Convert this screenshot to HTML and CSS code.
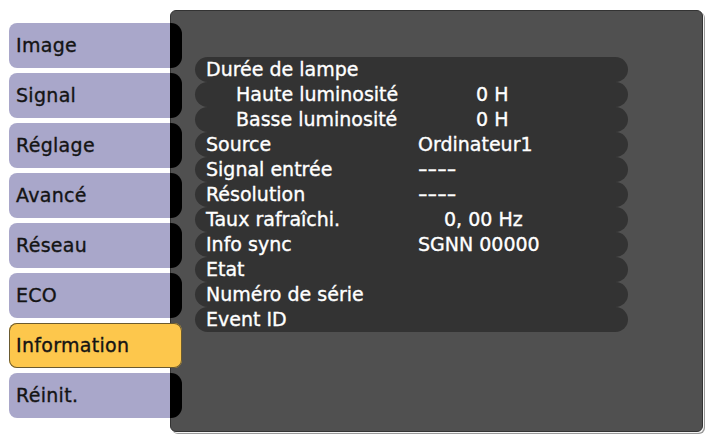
FILE: index.html
```html
<!DOCTYPE html>
<html lang="fr">
<head>
<meta charset="utf-8">
<title>Information</title>
<link rel="stylesheet" href="styles.css">
</head>
<body>
<div class="screen">
  <nav class="tabs">
    <div class="tab">Image</div>
    <div class="tab">Signal</div>
    <div class="tab">Réglage</div>
    <div class="tab">Avancé</div>
    <div class="tab">Réseau</div>
    <div class="tab">ECO</div>
    <div class="tab active">Information</div>
    <div class="tab">Réinit.</div>
  </nav>
  <section class="panel">
    <div class="rows">
      <div class="row"><span class="label">Durée de lampe</span><span class="value"></span></div>
      <div class="row sub"><span class="label">Haute luminosité</span><span class="value hours">0 H</span></div>
      <div class="row sub"><span class="label">Basse luminosité</span><span class="value hours">0 H</span></div>
      <div class="row"><span class="label">Source</span><span class="value">Ordinateur1</span></div>
      <div class="row"><span class="label">Signal entrée</span><span class="value dashes">----</span></div>
      <div class="row"><span class="label">Résolution</span><span class="value dashes">----</span></div>
      <div class="row"><span class="label">Taux rafraîchi.</span><span class="value hz">0, 00 Hz</span></div>
      <div class="row"><span class="label">Info sync</span><span class="value">SGNN 00000</span></div>
      <div class="row"><span class="label">Etat</span><span class="value"></span></div>
      <div class="row"><span class="label">Numéro de série</span><span class="value"></span></div>
      <div class="row"><span class="label">Event ID</span><span class="value"></span></div>
    </div>
  </section>
</div>
</body>
</html>
```
FILE: styles.css
```css
html, body {
  margin: 0;
  padding: 0;
  background: #ffffff;
}

body {
  font-family: "DejaVu Sans", "Liberation Sans", sans-serif;
  font-size: 19px;
  width: 712px;
  height: 440px;
  overflow: hidden;
}

.screen {
  display: flex;
  align-items: flex-start;
  padding: 10px 0 0 9px;
}

.tabs {
  display: flex;
  flex-direction: column;
  gap: 5px;
  width: 173px;
  padding-top: 13px;
  margin-right: -12px;
  position: relative;
  z-index: 1;
  flex-shrink: 0;
}

.tab {
  height: 45px;
  line-height: 45px;
  padding-left: 7px;
  border-radius: 8px 11px 11px 8px;
  background: linear-gradient(to right, #a9a7ca 0, #a9a7ca 161px, #000000 161px);
  color: #141414;
  white-space: nowrap;
  letter-spacing: 0.3px;
  -webkit-text-stroke: 0.35px #141414;
}

.tab.active {
  background: #fdc74c;
  box-shadow: inset 0 0 0 1px #6a5a30;
  border-radius: 8px;
}

.panel {
  box-sizing: border-box;
  width: 533px;
  height: 422px;
  flex-shrink: 0;
  background: #505050;
  border: 1px solid #333333;
  border-radius: 6px;
  box-shadow: 1px 1px 0 #f2f2f2, 2px 2px 0 #9a9a9a;
  padding: 46px 0 0 24px;
}

.rows {
  width: 433px;
  display: flex;
  flex-direction: column;
}

.row {
  display: flex;
  height: 25px;
  line-height: 25px;
  border-radius: 12.5px;
  background: #333333;
  color: #ffffff;
  padding-left: 11px;
  white-space: nowrap;
  -webkit-text-stroke: 0.35px #ffffff;
}

.label {
  box-sizing: border-box;
  width: 212px;
  flex-shrink: 0;
}

.row.sub .label {
  padding-left: 30px;
}

.value.hours {
  padding-left: 58px;
}

.value.hz {
  padding-left: 26px;
}

.value.dashes {
  display: inline-block;
  transform: scaleX(1.4);
  transform-origin: left center;
}
```
